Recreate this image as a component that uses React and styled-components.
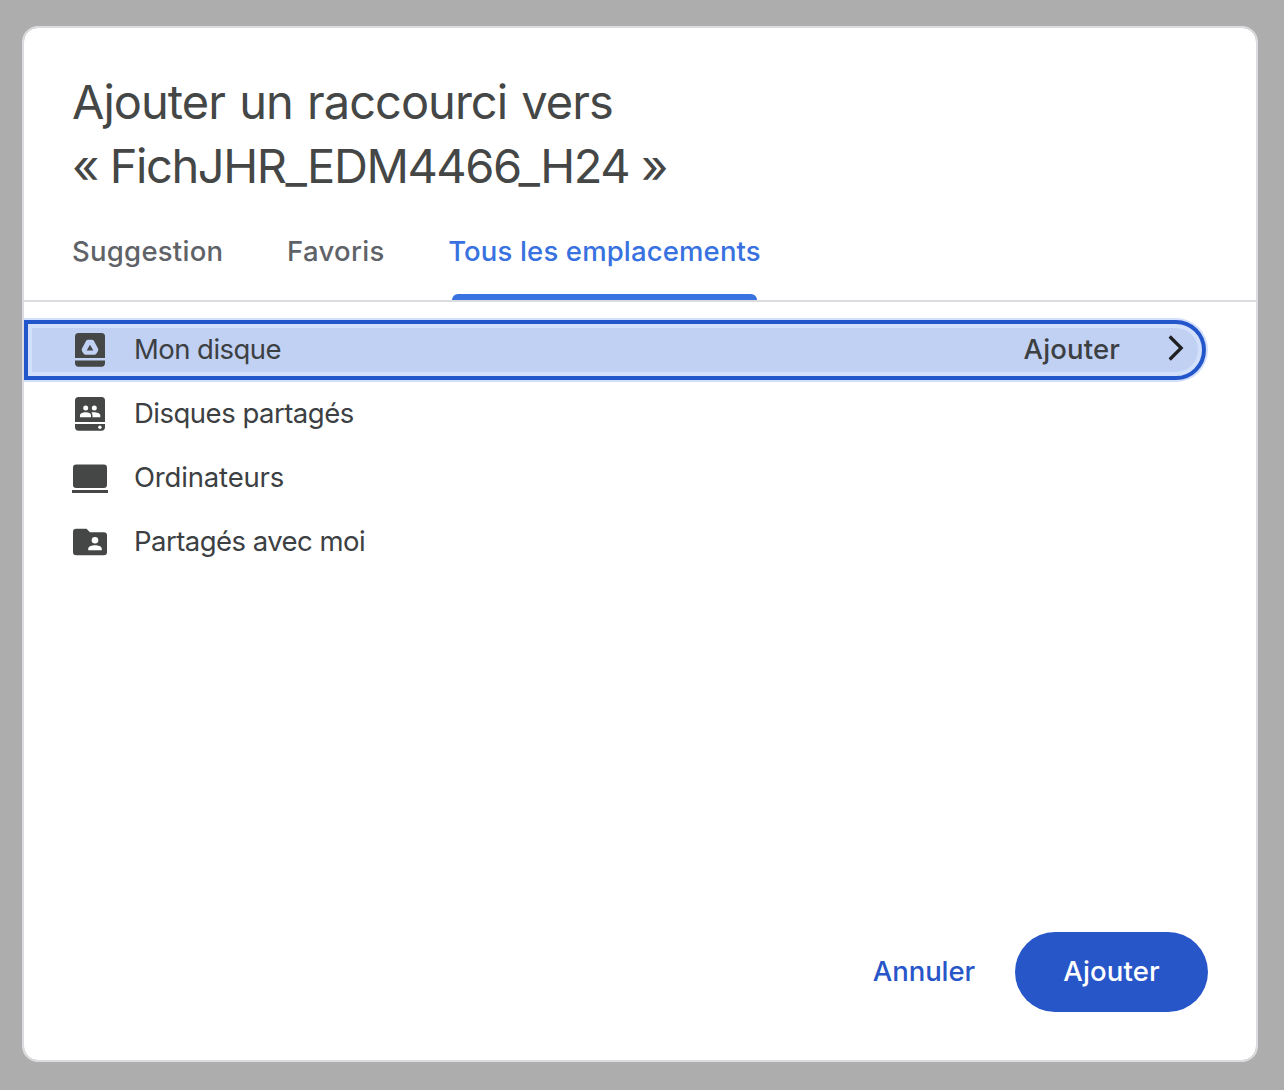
import React from "react";
import styled, { createGlobalStyle, css } from "styled-components";

const GlobalStyle = createGlobalStyle`
  * { box-sizing: border-box; }
  body {
    margin: 0;
    background: #adadad;
    font-family: Inter, "Open Sans", sans-serif;
  }
`;

const Backdrop = styled.div`
  display: flex;
  align-items: flex-start;
  height: 1090px;
  padding: 26px 26px 28px 22px;
  background: #adadad;
`;

const Dialog = styled.section`
  display: flex;
  flex-direction: column;
  width: 1236px;
  height: 1036px;
  overflow: hidden;
  background: #fff;
  background-clip: padding-box;
  border: 2px solid #dadce0;
  border-radius: 16px;
`;

const Title = styled.h1`
  margin: 0;
  padding: 42px 48px 1px;
  color: #444746;
  font-size: 47px;
  font-weight: 380;
  line-height: 64px;
`;

const TitleLine = styled.span`
  display: block;
  white-space: nowrap;
  letter-spacing: ${(p) => p.$spacing}px;
  word-spacing: ${(p) => p.$wordSpacing || 0}px;
`;

const Tabs = styled.nav`
  display: flex;
  gap: 64px;
  height: 103px;
  padding: 0 48px;
  border-bottom: 2px solid #dadce0;
`;

const Tab = styled.button`
  display: flex;
  flex-direction: column;
  justify-content: space-between;
  width: ${(p) => p.$width}px;
  padding: 36px 0 0;
  border: 0;
  background: none;
  color: ${(p) => (p.$active ? "#3871e0" : "#5f6368")};
  font: 500 27.5px/32px Inter, sans-serif;
  letter-spacing: ${(p) => p.$spacing}px;
  white-space: nowrap;
`;

const Indicator = styled.span`
  align-self: center;
  width: 305px;
  height: 6px;
  border-radius: 6px 6px 0 0;
  background: #3871e0;
`;

const List = styled.ul`
  display: flex;
  flex: 1;
  flex-direction: column;
  gap: 4px;
  margin: 0;
  padding: 18px 50px 0 0;
  list-style: none;
`;

const Row = styled.li`
  display: flex;
  align-items: center;
  height: 60px;
  padding: 0 17px 0 44px;
  border: 4px solid transparent;
  border-radius: 0 30px 30px 0;
  ${(p) =>
    p.$selected &&
    css`
      border-color: #2456cb;
      background: #c1d1f3;
      box-shadow: 0 0 0 2px #d3e0fb, inset 0 0 0 4px #d3e0fb;
    `}
`;

const Glyph = styled.svg`
  flex: none;
  width: 36px;
  height: 36px;
  margin-right: 26px;
  fill: #444746;
`;

const RowLabel = styled.span`
  flex: 1;
  padding-bottom: 2px;
  color: #3c4043;
  font-size: 27.5px;
  line-height: 32px;
  letter-spacing: ${(p) => p.$spacing}px;
`;

const RowAction = styled.span`
  margin-right: 47px;
  padding-bottom: 2px;
  color: #3c4043;
  font-size: 27.5px;
  font-weight: 500;
  line-height: 32px;
  letter-spacing: 0.15px;
`;

const Chevron = styled.svg`
  flex: none;
  width: 18px;
  height: 28px;
  margin-bottom: 4px;
  fill: none;
  stroke: #1f1f1f;
  stroke-width: 3.2;
`;

const Footer = styled.footer`
  display: flex;
  justify-content: flex-end;
  gap: 40px;
  padding: 0 48px 48px;
`;

const Button = styled.button`
  width: ${(p) => (p.$primary ? "193px" : "auto")};
  height: 80px;
  padding: 0 0 2px;
  border: 0;
  border-radius: 40px;
  background: ${(p) => (p.$primary ? "#2756c9" : "transparent")};
  color: ${(p) => (p.$primary ? "#fff" : "#2756c9")};
  font: 500 27.5px/32px Inter, sans-serif;
  letter-spacing: ${(p) => (p.$primary ? 0.15 : -0.1)}px;
`;

const DriveIcon = () => (
  <Glyph viewBox="0 0 36 36">
    <path d="M3 26V4.500Q3 1 6.500 1H29.500Q33 1 33 4.500V26Z" />
    <path d="M3 28.500H33V31Q33 34.700 29.500 34.700H6.500Q3 34.700 3 31Z" />
    <path
      d="M16.200 10.300H19.800L23.800 17.800L22.200 20.300H13.800L12.200 17.800Z"
      fill="#c1d1f3"
      stroke="#c1d1f3"
      strokeWidth="5"
      strokeLinejoin="round"
    />
    <path d="M18 12.800L21.300 18.400H14.700Z" />
  </Glyph>
);

const SharedDriveIcon = () => (
  <Glyph viewBox="0 0 36 36">
    <path d="M3 26V4.500Q3 1 6.500 1H29.500Q33 1 33 4.500V26Z" />
    <path d="M3 28H33V31Q33 34.700 29.500 34.700H6.500Q3 34.700 3 31Z" />
    <g fill="#fff">
      <circle cx="13.700" cy="11.900" r="2.500" />
      <circle cx="22.300" cy="11.900" r="2.500" />
      <path d="M8 21.200V19.200C8 17.500 11 16.300 13.700 16.300S19 17.500 19 19.200V21.200Z" />
      <path d="M20.500 21.200V19.200Q20.500 17.600 19.300 16.600C23 15.800 28.300 17 28.300 19.200V21.200Z" />
      <circle cx="27.900" cy="31.300" r="1.700" />
    </g>
  </Glyph>
);

const LaptopIcon = () => (
  <Glyph viewBox="0 0 36 36">
    <rect x="1" y="4.500" width="34" height="23.500" rx="3.200" />
    <rect x="0" y="30" width="36" height="3" />
  </Glyph>
);

const SharedFolderIcon = () => (
  <Glyph viewBox="0 0 36 36">
    <path d="M4.200 4.700H14.500L18 8.200H31.800Q35 8.200 35 11.400V28Q35 31.200 31.800 31.200H4.200Q1 31.200 1 28V7.900Q1 4.700 4.200 4.700Z" />
    <g fill="#fff">
      <circle cx="23" cy="16.200" r="3.300" />
      <path d="M16.200 26.200V24.700C16.200 22.300 20 21.200 23 21.200S29.800 22.300 29.800 24.700V26.200Z" />
    </g>
  </Glyph>
);

const TABS = [
  { label: "Suggestion", width: 151, spacing: 0.25 },
  { label: "Favoris", width: 97, spacing: 0.3 },
  { label: "Tous les emplacements", width: 313, spacing: 0.15, active: true },
];

const PLACES = [
  { label: "Mon disque", Icon: DriveIcon, spacing: -0.55, selected: true },
  { label: "Disques partagés", Icon: SharedDriveIcon, spacing: -0.5 },
  { label: "Ordinateurs", Icon: LaptopIcon, spacing: -0.17 },
  { label: "Partagés avec moi", Icon: SharedFolderIcon, spacing: -0.54 },
];

export default function App() {
  return (
    <>
      <GlobalStyle />
      <Backdrop>
        <Dialog role="dialog">
          <Title>
            <TitleLine $spacing={-0.98} $wordSpacing={2}>Ajouter un raccourci vers</TitleLine>
            <TitleLine $spacing={-1.43}>« FichJHR_EDM4466_H24 »</TitleLine>
          </Title>
          <Tabs>
            {TABS.map((t) => (
              <Tab key={t.label} $width={t.width} $spacing={t.spacing} $active={t.active}>
                {t.label}
                {t.active && <Indicator />}
              </Tab>
            ))}
          </Tabs>
          <List>
            {PLACES.map(({ label, Icon, spacing, selected }) => (
              <Row key={label} $selected={selected}>
                <Icon />
                <RowLabel $spacing={spacing}>{label}</RowLabel>
                {selected && (
                  <>
                    <RowAction>Ajouter</RowAction>
                    <Chevron viewBox="0 0 18 28">
                      <path d="M2.700 2.500L14.200 14L2.700 25.500" />
                    </Chevron>
                  </>
                )}
              </Row>
            ))}
          </List>
          <Footer>
            <Button>Annuler</Button>
            <Button $primary>Ajouter</Button>
          </Footer>
        </Dialog>
      </Backdrop>
    </>
  );
}
